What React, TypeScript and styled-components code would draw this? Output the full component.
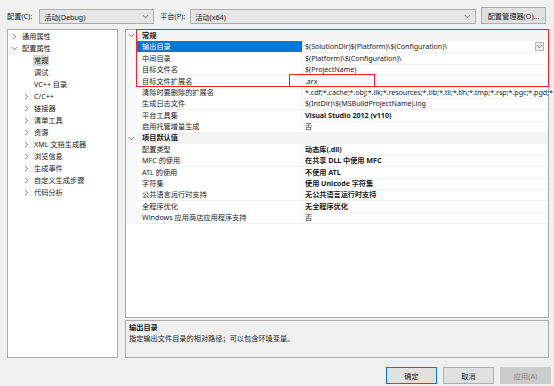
import styled, { createGlobalStyle } from "styled-components";

const GlobalStyle = createGlobalStyle`
  html, body {
    margin: 0;
    padding: 0;
    background: #f0f0f0;
  }
  body {
    font-family: "Noto Sans", "Noto Sans CJK SC", sans-serif;
    font-size: 7.2px;
    color: #1b1b1b;
  }
`;

type Prop = {
  name: string;
  value: string;
  bold?: boolean;
  selected?: boolean;
  dropdown?: boolean;
};

const general: Prop[] = [
  { name: "输出目录", value: "$(SolutionDir)$(Platform)\\$(Configuration)\\", selected: true, dropdown: true },
  { name: "中间目录", value: "$(Platform)\\$(Configuration)\\" },
  { name: "目标文件名", value: "$(ProjectName)" },
  { name: "目标文件扩展名", value: ".arx" },
  { name: "清除时要删除的扩展名", value: "*.cdf;*.cache;*.obj;*.ilk;*.resources;*.tlb;*.tli;*.tlh;*.tmp;*.rsp;*.pgc;*.pgd;*" },
  { name: "生成日志文件", value: "$(IntDir)\\$(MSBuildProjectName).log" },
  { name: "平台工具集", value: "Visual Studio 2012 (v110)", bold: true },
  { name: "启用托管增量生成", value: "否" },
];

const defaults: Prop[] = [
  { name: "配置类型", value: "动态库(.dll)", bold: true },
  { name: "MFC 的使用", value: "在共享 DLL 中使用 MFC", bold: true },
  { name: "ATL 的使用", value: "不使用 ATL", bold: true },
  { name: "字符集", value: "使用 Unicode 字符集", bold: true },
  { name: "公共语言运行时支持", value: "无公共语言运行时支持", bold: true },
  { name: "全程序优化", value: "无全程序优化", bold: true },
  { name: "Windows 应用商店应用程序支持", value: "否" },
];

type TreeNode = { label: string; level: number; arrow?: "right" | "down"; active?: boolean };

const tree: TreeNode[] = [
  { label: "通用属性", level: 1, arrow: "right" },
  { label: "配置属性", level: 1, arrow: "down" },
  { label: "常规", level: 2, active: true },
  { label: "调试", level: 2 },
  { label: "VC++ 目录", level: 2 },
  { label: "C/C++", level: 2, arrow: "right" },
  { label: "链接器", level: 2, arrow: "right" },
  { label: "清单工具", level: 2, arrow: "right" },
  { label: "资源", level: 2, arrow: "right" },
  { label: "XML 文档生成器", level: 2, arrow: "right" },
  { label: "浏览信息", level: 2, arrow: "right" },
  { label: "生成事件", level: 2, arrow: "right" },
  { label: "自定义生成步骤", level: 2, arrow: "right" },
  { label: "代码分析", level: 2, arrow: "right" },
];

function Chevron({ dir }: { dir: "right" | "down" }) {
  return (
    <svg width="7" height="7" viewBox="0 0 7 7">
      <path
        d={dir === "right" ? "M2 0.8 L4.8 3.5 L2 6.2" : "M0.8 2 L3.5 4.8 L6.2 2"}
        fill="none"
        stroke="#6d6d6d"
        strokeWidth="0.9"
      />
    </svg>
  );
}

function App() {
  return (
    <Dialog>
      <GlobalStyle />
      <Toolbar>
        <Label>配置(C):</Label>
        <Combo $width="115px" $gap="7px">
          <span>活动(Debug)</span>
          <Chevron dir="down" />
        </Combo>
        <Label $gap="6px">平台(P):</Label>
        <Combo $gap="5px" $grow>
          <span>活动(x64)</span>
          <Chevron dir="down" />
        </Combo>
        <ManagerButton>配置管理器(O)...</ManagerButton>
      </Toolbar>

      <Main>
        <TreePanel>
          {tree.map((n) => (
            <TreeItem key={n.label} $level={n.level}>
              <ArrowBox>{n.arrow && <Chevron dir={n.arrow} />}</ArrowBox>
              <TreeLabel $active={n.active}>{n.label}</TreeLabel>
            </TreeItem>
          ))}
        </TreePanel>

        <RightColumn>
          <PropertyGrid>
            <GroupRow>
              <Gutter>
                <Chevron dir="down" />
              </Gutter>
              <GroupTitle>常规</GroupTitle>
            </GroupRow>
            {general.map((p) => (
              <PropRow key={p.name}>
                <Gutter />
                <NameCell $selected={p.selected}>{p.name}</NameCell>
                <ValueCell $bold={p.bold}>
                  <ValueText>{p.value}</ValueText>
                  {p.dropdown && (
                    <DropButton>
                      <Chevron dir="down" />
                    </DropButton>
                  )}
                </ValueCell>
              </PropRow>
            ))}
            <GroupRow>
              <Gutter>
                <Chevron dir="down" />
              </Gutter>
              <GroupTitle>项目默认值</GroupTitle>
            </GroupRow>
            {defaults.map((p) => (
              <PropRow key={p.name}>
                <Gutter />
                <NameCell>{p.name}</NameCell>
                <ValueCell $bold={p.bold}>
                  <ValueText>{p.value}</ValueText>
                </ValueCell>
              </PropRow>
            ))}
            <Highlight $left="10px" $top="-1px" $width="413px" $height="58px" />
            <Highlight $left="163px" $top="44px" $width="86px" $height="13px" />
          </PropertyGrid>

          <Description>
            <DescTitle>输出目录</DescTitle>
            <DescText>指定输出文件目录的相对路径；可以包含环境变量。</DescText>
          </Description>
        </RightColumn>
      </Main>

      <Footer>
        <DialogButton $variant="primary">确定</DialogButton>
        <DialogButton>取消</DialogButton>
        <DialogButton $variant="disabled">应用(A)</DialogButton>
      </Footer>
    </Dialog>
  );
}

export default App;

// styles

const Dialog = styled.div`
  width: 554px;
  height: 386px;
  box-sizing: border-box;
  padding: 4px 3px 0 7px;
  display: flex;
  flex-direction: column;
  background: #f0f0f0;
  overflow: hidden;
`;

const Toolbar = styled.div`
  display: flex;
  align-items: flex-end;
  height: 20px;
`;

const Label = styled.div<{ $gap?: string }>`
  height: 15px;
  line-height: 15px;
  margin-left: ${(p) => p.$gap || "0"};
  white-space: nowrap;
`;

const Combo = styled.div<{ $width?: string; $gap?: string; $grow?: boolean }>`
  box-sizing: border-box;
  height: 15px;
  width: ${(p) => p.$width || "auto"};
  flex: ${(p) => (p.$grow ? "1" : "none")};
  margin-left: ${(p) => p.$gap || "0"};
  display: flex;
  align-items: center;
  justify-content: space-between;
  padding: 0 4px 0 4px;
  background: #e6e6e6;
  border: 1px solid #adadad;
  & svg {
    margin-bottom: 1px;
  }
`;

const ManagerButton = styled.div`
  box-sizing: border-box;
  width: 65px;
  height: 17px;
  margin-left: 5px;
  margin-right: 5px;
  display: flex;
  align-items: center;
  justify-content: center;
  background: #e1e1e1;
  border: 1px solid #adadad;
  white-space: nowrap;
`;

const Main = styled.div`
  margin-top: 5px;
  margin-right: 2px;
  height: 329px;
  display: grid;
  grid-template-columns: 111px 1fr;
  column-gap: 7px;
`;

const TreePanel = styled.div`
  box-sizing: border-box;
  background: #ffffff;
  border: 1px solid #a9a9a9;
  padding-top: 0;
`;

const TreeItem = styled.div<{ $level: number }>`
  height: 12px;
  display: flex;
  align-items: center;
  padding-left: ${(p) => (p.$level === 1 ? "2px" : "14px")};
`;

const ArrowBox = styled.div`
  width: 8px;
  height: 8px;
  display: flex;
  align-items: center;
  justify-content: center;
  margin-right: 3px;
`;

const TreeLabel = styled.span<{ $active?: boolean }>`
  padding: 0 1px;
  line-height: 11px;
  background: ${(p) => (p.$active ? "#d9d9d9" : "transparent")};
  white-space: nowrap;
`;

const RightColumn = styled.div`
  display: flex;
  flex-direction: column;
  gap: 2px;
`;

const PropertyGrid = styled.div`
  position: relative;
  box-sizing: border-box;
  height: 289px;
  background: #ffffff;
  border: 1px solid #a9a9a9;
`;

const GroupRow = styled.div`
  display: grid;
  grid-template-columns: 11px 1fr;
  height: 11.375px;
`;

const Gutter = styled.div`
  background: #f7f8fa;
  display: flex;
  align-items: center;
  justify-content: center;
`;

const GroupTitle = styled.div`
  background: #f4f4f4;
  font-weight: bold;
  padding-left: 5px;
  line-height: 11.375px;
  white-space: nowrap;
`;

const PropRow = styled.div`
  display: grid;
  grid-template-columns: 11px 165px 1fr;
  height: 11.375px;
`;

const NameCell = styled.div<{ $selected?: boolean }>`
  box-sizing: border-box;
  padding-left: 5px;
  line-height: 11px;
  white-space: nowrap;
  overflow: hidden;
  background: ${(p) => (p.$selected ? "#0078d7" : "#ffffff")};
  color: ${(p) => (p.$selected ? "#ffffff" : "#1b1b1b")};
  border-bottom: 1px solid #f0f0f0;
`;

const ValueCell = styled.div<{ $bold?: boolean }>`
  box-sizing: border-box;
  display: flex;
  align-items: center;
  min-width: 0;
  padding-left: 2px;
  padding-right: 4px;
  font-weight: ${(p) => (p.$bold ? "bold" : "normal")};
  border-left: 1px solid #f0f0f0;
  border-bottom: 1px solid #f0f0f0;
`;

const ValueText = styled.span`
  flex: 1;
  white-space: nowrap;
  line-height: 11px;
  letter-spacing: -0.06px;
`;

const DropButton = styled.div`
  box-sizing: border-box;
  width: 9px;
  height: 9px;
  display: flex;
  align-items: center;
  justify-content: center;
  background: #f0f0f0;
  border: 1px solid #b5b5b5;
`;

const Highlight = styled.div<{ $left: string; $top: string; $width: string; $height: string }>`
  position: absolute;
  left: ${(p) => p.$left};
  top: ${(p) => p.$top};
  width: ${(p) => p.$width};
  height: ${(p) => p.$height};
  box-sizing: border-box;
  border: 1.5px solid #f2222a;
  pointer-events: none;
`;

const Description = styled.div`
  box-sizing: border-box;
  height: 38px;
  border: 1px solid #a9a9a9;
  background: #f0f0f0;
  padding: 1px 3px;
`;

const DescTitle = styled.div`
  font-weight: bold;
  line-height: 11px;
`;

const DescText = styled.div`
  line-height: 11px;
`;

const Footer = styled.div`
  display: flex;
  justify-content: flex-end;
  gap: 6px;
  margin-top: 9px;
`;

const DialogButton = styled.div<{ $variant?: "primary" | "disabled" }>`
  box-sizing: border-box;
  width: 51px;
  height: 17px;
  display: flex;
  align-items: center;
  justify-content: center;
  background: ${(p) => (p.$variant === "disabled" ? "#cccccc" : "#e1e1e1")};
  color: ${(p) => (p.$variant === "disabled" ? "#838383" : "#1b1b1b")};
  border: 1px solid
    ${(p) =>
      p.$variant === "primary" ? "#0078d7" : p.$variant === "disabled" ? "#cccccc" : "#adadad"};
`;
